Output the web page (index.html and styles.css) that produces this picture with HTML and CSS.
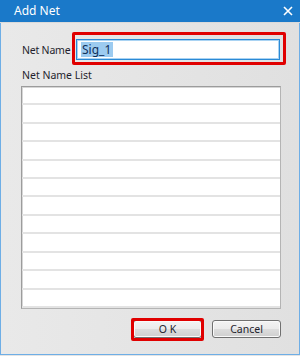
FILE: index.html
```html
<!DOCTYPE html>
<html>
<head>
<meta charset="utf-8">
<link rel="stylesheet" href="styles.css">
</head>
<body>
<div class="window">
  <div class="titlebar">
    <span class="title">Add Net</span>
    <svg class="close" width="10" height="10" viewBox="0 0 10 10"><path d="M1 1 L9 9 M9 1 L1 9" stroke="#fff" stroke-width="1.6" fill="none"/></svg>
  </div>
  <div class="content">
    <div class="name-row">
      <span class="label">Net Name</span>
      <div class="highlight-box">
        <div class="input"><span class="sel">Sig_1</span></div>
      </div>
    </div>
    <div class="label list-label">Net Name List</div>
    <div class="list">
      <div class="row"></div><div class="row"></div><div class="row"></div><div class="row"></div>
      <div class="row"></div><div class="row"></div><div class="row"></div><div class="row"></div>
      <div class="row"></div><div class="row"></div><div class="row"></div><div class="row"></div>
    </div>
    <div class="buttons">
      <span class="ok-wrap"><button class="btn">O K</button></span>
      <button class="btn">Cancel</button>
    </div>
  </div>
</div>
</body>
</html>
```

FILE: styles.css
```css
html, body {
  margin: 0;
  padding: 0;
}
body {
  width: 300px;
  height: 356px;
  background: #e4e4e4;
  font-family: "Noto Sans", "Open Sans", sans-serif;
  font-size: 10.5px;
  color: #1f1f2e;
}
.window {
  box-sizing: border-box;
  width: 300px;
  height: 355px;
  display: flex;
  flex-direction: column;
  border-left: 1px solid #6eaee6;
  border-right: 1px solid #6eaee6;
  border-bottom: 1px solid #6eaee6;
  background: linear-gradient(90deg, #e9e9e9, #e0e0e0);
}
.titlebar {
  height: 22px;
  margin: 0 -1px;
  background: #1a79c9;
  display: flex;
  align-items: center;
  justify-content: space-between;
  padding: 0 7px 0 14px;
  border-bottom: 1px solid #dadada;
}
.title {
  color: #fff;
  font-size: 12px;
  line-height: 22px;
}
.close {
  display: block;
}
.content {
  padding: 9px 0 0 19px;
  display: flex;
  flex-direction: column;
}
.name-row {
  display: flex;
  align-items: center;
}
.name-row .label {
  flex: none;
  width: 50px;
  padding-left: 2px;
  padding-top: 2px;
  white-space: nowrap;
  letter-spacing: -0.2px;
}
.label {
  line-height: 14px;
}
.highlight-box {
  border: 3px solid #e00000;
  border-radius: 2px;
  padding: 4px 3px 2px 1px;
}
.input {
  box-sizing: border-box;
  width: 204px;
  height: 21px;
  background: #fff;
  border: 1px solid #2b8ad6;
  box-shadow: inset 0 0 0 1px #a9d3f3;
  display: flex;
  align-items: center;
  padding-left: 4px;
}
.sel {
  background: #9ccbf0;
  color: #10305a;
  font-size: 12px;
  line-height: 15px;
  padding: 0 2px 0 1px;
}
.list-label {
  margin-top: 3px;
  padding-left: 2px;
}
.list {
  box-sizing: border-box;
  margin-top: 4px;
  margin-left: 1px;
  width: 260px;
  height: 223px;
  background: #fff;
  border: 1px solid #9c9c9c;
  border-right-color: #b4b4b4;
  border-bottom-color: #b4b4b4;
  box-shadow: inset 1px 1px 0 #d6d6d6;
  display: grid;
  grid-template-rows: repeat(12, 1fr);
}
.row {
  border-bottom: 2px solid #e3e3e3;
}
.buttons {
  display: flex;
  justify-content: flex-end;
  gap: 10px;
  width: 261px;
  margin-top: 11px;
}
.ok-wrap {
  position: relative;
  display: block;
}
.ok-wrap::after {
  content: "";
  position: absolute;
  left: -2px;
  right: -2px;
  top: -2px;
  bottom: -3px;
  border: 3px solid #e00000;
  border-radius: 2px;
}
.btn {
  display: block;
  box-sizing: border-box;
  width: 69px;
  height: 18px;
  margin: 0;
  padding: 0;
  font-family: "Noto Sans", "Open Sans", sans-serif;
  font-size: 10.5px;
  line-height: 14px;
  color: #1f1f2e;
  border: 1px solid #707070;
  border-radius: 3px;
  background: linear-gradient(#f3f3f3 0%, #ebebeb 50%, #dddddd 51%, #cfcfcf 100%);
  box-shadow: inset 0 0 0 1px #fafafa;
}
```
